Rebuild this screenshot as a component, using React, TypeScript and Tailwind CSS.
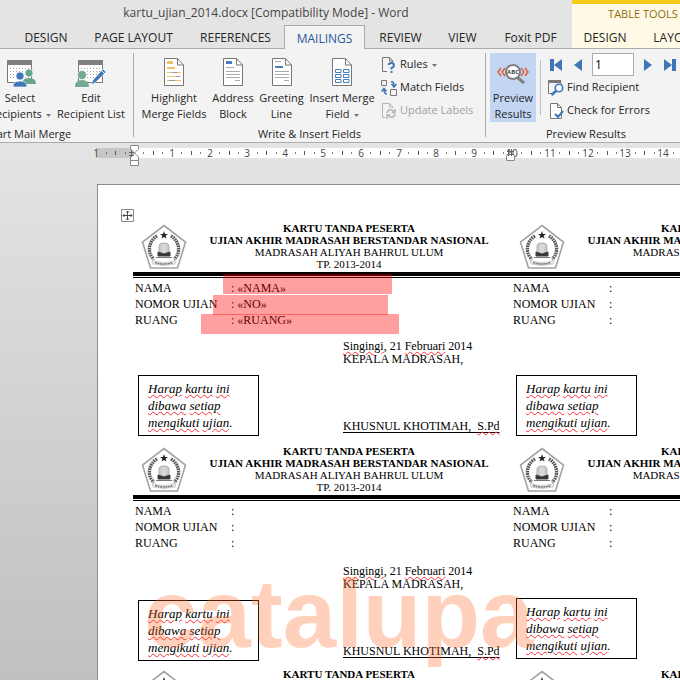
import React from "react";

const Misspelt = ({ children }: { children: React.ReactNode }) => (
  <span className="underline decoration-red-500 decoration-wavy decoration-1 underline-offset-1">{children}</span>
);

function Logo() {
  return (
    <svg width="46" height="46" viewBox="0 0 46 46" aria-hidden="true">
      <polygon points="23,1.5 44.5,18 36.5,44 9.5,44 1.5,18" fill="#fff" stroke="#a3a3a3" strokeWidth="1.6" />
      <path d="M16 12C7 17 6 30 13 35M30 12C39 17 40 30 33 35" fill="none" stroke="#555" strokeWidth="3.4" strokeDasharray="1.6 .8" />
      <polygon points="23,7 24,10 27,10 24.6,11.8 25.5,14.5 23,13 20.5,14.5 21.4,11.8 19,10 22,10" fill="#222" />
      <path d="M18 29V22Q18 19 23 19T28 22V29Z" fill="#ccc" stroke="#999" strokeWidth=".7" />
      <path d="M22 20V29M24 20V29" stroke="#eee" strokeWidth=".7" />
      <path d="M17 28L23 30L29 28V32H17Z" fill="#333" stroke="#444" />
      <path d="M15 33.5H31" stroke="#777" />
      <path d="M11 36Q23 41 35 36L34 40Q23 43 12 40Z" fill="#eee" stroke="#bbb" strokeWidth=".7" />
      <path d="M14 38.5Q23 41.500 32 38.5" fill="none" stroke="#777" strokeWidth="1.5" strokeDasharray="2 .6" />
    </svg>
  );
}

function Field({ label, value }: { label: string; value?: string }) {
  return (
    <div className="flex">
      <dt className="w-24">{label}</dt>
      <dd className="whitespace-pre">: {value}</dd>
    </div>
  );
}

function Card({ filled, late }: { filled?: boolean; late?: boolean }) {
  return (
    <article className="relative h-[223px] w-[378px] shrink-0">
      <header className="flex h-12 pl-2">
        <div className="mt-0.5 w-[46px] shrink-0"><Logo /></div>
        <div className="w-[328px] text-center text-[11px] leading-3 whitespace-nowrap">
          <p className="font-bold">KARTU TANDA PESERTA</p>
          <p className="font-bold">UJIAN AKHIR MADRASAH BERSTANDAR NASIONAL</p>
          <p>MADRASAH ALIYAH BAHRUL ULUM</p>
          <p>TP. 2013-2014</p>
        </div>
      </header>
      <div className="mt-0.5 h-1.5 border-b border-black bg-black bg-clip-content pb-px" />
      <dl className="mt-0.5 pl-0.5 text-[12px] leading-4">
        <Field label="NAMA" value={filled ? "«NAMA»" : ""} />
        <Field label="NOMOR UJIAN" value={filled ? "«NO»" : ""} />
        <Field label="RUANG" value={filled ? "«RUANG»" : ""} />
      </dl>
      <div className={late ? "flex pt-3.5" : "flex pt-3"}>
        <div className="mt-[35px] ml-[5px] h-[61px] w-[121px] shrink-0 border border-black pt-1 pl-[9px] text-[13px] leading-[17px] italic">
          <p><Misspelt>Harap</Misspelt> <Misspelt>kartu</Misspelt> <Misspelt>ini</Misspelt></p>
          <p><Misspelt>dibawa</Misspelt> <Misspelt>setiap</Misspelt></p>
          <p><Misspelt>mengikuti</Misspelt> <Misspelt>ujian</Misspelt>.</p>
        </div>
        <div className="ml-[84px] text-[12px] leading-[13px] whitespace-nowrap">
          <p><Misspelt>Singingi</Misspelt>, 21 <Misspelt>Februari</Misspelt> 2014</p>
          <p>KEPALA MADRASAH,</p>
          <p className="mt-[54px] whitespace-pre underline underline-offset-2">KHUSNUL KHOTIMAH,  <Misspelt>S.Pd</Misspelt></p>
        </div>
      </div>
      {filled && (
        <>
          <div className="absolute top-[52px] left-[90px] h-5 w-[169px] bg-[#ff000060]" />
          <div className="absolute top-[73px] left-20 h-5 w-[175px] bg-[#ff000060]" />
          <div className="absolute top-[92px] left-[68px] h-5 w-[198px] bg-[#ff000060]" />
        </>
      )}
    </article>
  );
}

const Sheet = ({ children }: { children?: React.ReactNode }) => (
  <svg width="22" height="30" viewBox="0 0 22 30" fill="none" aria-hidden="true">
    <path d="M1.5 1.5H14.5L20.5 8V28.500H1.5Z" fill="#fff" stroke="#777" />
    <path d="M14.5 1.5V8H20.5" stroke="#777" />
    {children}
  </svg>
);

const People = ({ edit }: { edit?: boolean }) => (
  <svg width="32" height="31" viewBox="0 0 32 31" aria-hidden="true">
    <path d="M3.5 4V25.5H27.500V4" fill="#fff" stroke="#777" />
    <path d="M3 3H28V8H3Z" fill="#808080" />
    <path d="M6 11.5H26M6 14.5H26M6 17.5H26M6 20.5H26" stroke="#aaa" strokeDasharray="1 2" />
    {edit ? (
      <>
        <circle cx="7" cy="18" r="4.5" fill="#74a892" stroke="#fff" strokeWidth=".6" />
        <path d="M0 30Q0 23 7 23T14 30Z" fill="#74a892" />
        <path d="M16 28L18 23L28 12L31 15L21 25Z" fill="#3f76b8" stroke="#fff" strokeWidth=".6" />
        <path d="M26.5 13.500L29.5 16.5" stroke="#fff" />
      </>
    ) : (
      <>
        <circle cx="25" cy="16" r="4" fill="#67a58b" stroke="#fff" strokeWidth=".6" />
        <path d="M18 27Q18 21 25 21T32 27Z" fill="#67a58b" />
        <circle cx="16" cy="19" r="4" fill="#3f76b8" stroke="#fff" strokeWidth=".6" />
        <path d="M9 30Q9 24 16 24T23 30Z" fill="#3f76b8" stroke="#fff" strokeWidth=".6" />
      </>
    )}
  </svg>
);

const Caret = () => (
  <svg className="ml-1 inline-block" width="5" height="3" viewBox="0 0 5 3" aria-hidden="true"><path d="M0 0H5L2.5 3Z" fill="#777" /></svg>
);

function Big({ className, icon, children }: { className: string; icon: React.ReactNode; children: React.ReactNode }) {
  return (
    <button type="button" className={`${className} flex h-[69px] shrink-0 flex-col items-center pt-1 leading-4 whitespace-nowrap`}>
      <span className="flex h-[34px] items-start">{icon}</span>
      {children}
    </button>
  );
}

function Small({ icon, children, disabled }: { icon: React.ReactNode; children: React.ReactNode; disabled?: boolean }) {
  return (
    <button type="button" disabled={disabled} className="flex h-[23px] items-center gap-[3px] whitespace-nowrap disabled:text-[#a0a0a0]">
      <svg width="16" height="16" viewBox="0 0 16 16" fill="none" aria-hidden="true">{icon}</svg>
      <span>{children}</span>
    </button>
  );
}

const tabs: [string, string][] = [
  ["DESIGN", "w-[68px]"],
  ["PAGE LAYOUT", "w-[107px]"],
  ["REFERENCES", "w-[97px]"],
  ["MAILINGS", "w-[81px]"],
  ["REVIEW", "w-[71px]"],
  ["VIEW", "w-[53px]"],
  ["Foxit PDF", "w-[83px]"],
];

function Ribbon() {
  return (
    <div className="flex h-[94px] shrink-0 overflow-hidden border-b border-[#ababab] bg-[#f3f3f3] pt-1 text-[11px]">
      <section className="flex h-[84px] w-[134px] shrink-0 flex-col border-r border-[#ababab]">
        <div className="-ml-4 flex">
          <Big className="w-[72px]" icon={<People />}><span>Select</span><span>Recipients<Caret /></span></Big>
          <Big className="w-[70px]" icon={<People edit />}><span>Edit</span><span>Recipient List</span></Big>
        </div>
        <h2 className="-ml-4 w-[90px] text-center leading-6 whitespace-nowrap">Start Mail Merge</h2>
      </section>
      <section className="flex h-[84px] w-[352px] shrink-0 flex-col border-r border-[#ababab]">
        <div className="flex pl-1">
          <Big className="w-[72px]" icon={
            <Sheet><path d="M4 4H10V7H4Z" fill="#eec069" /><path d="M4 11H12" stroke="#eec069" strokeWidth="2" /><path d="M4 15.5H18M4 19.5H18M4 23.5H18" stroke="#eec069" /><path d="M9 15.5H14M13 19.5H17M6 23.5H12" stroke="#999" /></Sheet>
          }><span>Highlight</span><span>Merge Fields</span></Big>
          <Big className="w-[46px]" icon={
            <Sheet><path d="M4 4H10V7H4Z" fill="#4a7ebb" /><path d="M4 10.5H12M4 14.5H18M4 17.5H18M4 20.5H18M13 23.5H18" stroke="#aaa" /></Sheet>
          }><span>Address</span><span>Block</span></Big>
          <Big className="w-[51px]" icon={
            <Sheet><path d="M4 4.5H10M4 14.5H18M4 17.5H18M4 20.5H18M13 23.5H18" stroke="#aaa" /><path d="M4 9H12V11H4Z" fill="#4a7ebb" /></Sheet>
          }><span>Greeting</span><span>Line</span></Big>
          <Big className="w-[70px]" icon={
            <Sheet><path d="M4.5 12.5H10V15.5H4.5ZM12.5 12.5H18V15.5H12.5ZM4.5 17.5H10V20.5H4.5ZM12.5 17.5H18V20.5H12.5ZM4.5 22.5H10V25.5H4.5ZM12.5 22.5H18V25.5H12.5Z" stroke="#4a7ebb" /></Sheet>
          }><span>Insert Merge</span><span>Field<Caret /></span></Big>
          <div className="ml-1">
            <Small icon={<><path d="M6 14.5H1.500V.5H8.500L12 4V5M8.5 .5V4H12" stroke="#777" /><path d="M7.5 8Q8 6 10.5 6T13 8.500Q13 10 10.5 11V12.5M10.5 14V16" stroke="#3f76b8" strokeWidth="2" /></>}>Rules<Caret /></Small>
            <Small icon={<><path d="M.5 .5H5.500V5.500H.5ZM9.5 9.500H15.5V15.5H9.500Z" stroke="#777" /><path d="M10 2Q13 1 13 6M10.5 4L13 7L15.5 4M6 14Q3 14 3 9M.5 11.5L3 8.500L5.5 11.5" stroke="#3f76b8" strokeWidth="1.5" /></>}>Match Fields</Small>
            <Small disabled icon={<><path d="M4 14.5H1.500V.5H8.500L12 4V5M8.5 .5V4H12" stroke="#b5b5b5" /><path d="M6 10Q7 6 11 7L13 9M14 6V9.500H10.5M14 11Q13 15 9 14L7 12.5M6 16V12H9.500" stroke="#b5b5b5" strokeWidth="1.5" /></>}>Update Labels</Small>
          </div>
        </div>
        <h2 className="text-center leading-6">Write &amp; Insert Fields</h2>
      </section>
      <section className="flex h-[84px] w-[200px] shrink-0 flex-col">
        <div className="flex pl-1">
          <Big className="w-[46px] bg-[#c2d5f2]" icon={
            <svg width="32" height="32" viewBox="0 0 32 32" fill="none" aria-hidden="true">
              <path d="M4 11L1 15L4 19M8 11L5 15L8 19M24 11L27 15L24 19M28 11L31 15L28 19" stroke="#e0603a" strokeWidth="1.5" />
              <path d="M20 20L27 26" stroke="#808080" strokeWidth="3" />
              <circle cx="16" cy="15" r="7" fill="#fff" stroke="#808080" strokeWidth="2" />
              <text x="16" y="17" textAnchor="middle" fontSize="6" fontWeight="700" fill="#444">ABC</text>
            </svg>
          }><span>Preview</span><span>Results</span></Big>
          <div className="mt-[7px] ml-1 h-[55px] w-px bg-[#c0c0c0]" />
          <div className="ml-[7px]">
            <div className="flex h-[23px] items-center">
              <button type="button" aria-label="First record" className="ml-0.5"><svg width="12" height="12" viewBox="0 0 12 12"><path d="M0 0H4V12H0ZM12 0V12L4 6Z" fill="#3f76b8" /></svg></button>
              <button type="button" aria-label="Previous record" className="ml-3"><svg width="8" height="12" viewBox="0 0 8 12"><path d="M8 0V12L0 6Z" fill="#3f76b8" /></svg></button>
              <input aria-label="Record" defaultValue="1" className="ml-2.5 h-[23px] w-[42px] border border-[#ababab] bg-white px-0.5 text-[12px] text-black" />
              <button type="button" aria-label="Next record" className="ml-2.5"><svg width="8" height="12" viewBox="0 0 8 12"><path d="M0 0V12L8 6Z" fill="#3f76b8" /></svg></button>
              <button type="button" aria-label="Last record" className="ml-3"><svg width="12" height="12" viewBox="0 0 12 12"><path d="M12 0H8V12H12ZM0 0V12L8 6Z" fill="#3f76b8" /></svg></button>
            </div>
            <Small icon={<><path d="M.5 1V13.5H4M13 3V5" stroke="#777" /><path d="M0 0H13V3H0Z" fill="#777" /><circle cx="11" cy="8" r="3.7" fill="#fff" stroke="#3f76b8" strokeWidth="1.6" /><path d="M8.5 10.5L3.5 15" stroke="#3f76b8" strokeWidth="2.5" /></>}>Find Recipient</Small>
            <Small icon={<><path d="M2.5 .5H9.500L13.5 4.500V15.5H2.500ZM9.5 .5V4.500H13.5" fill="#fff" stroke="#777" /><path d="M7 11L10 14L15 8" stroke="#3f76b8" strokeWidth="2" /></>}>Check for Errors</Small>
          </div>
        </div>
        <h2 className="text-center leading-6">Preview Results</h2>
      </section>
    </div>
  );
}

function Ruler() {
  const at = (n: number) => Math.round(134 + n * 37.8);
  const units = Array.from({ length: 16 }, (_, i) => i - 1);
  return (
    <svg className="block h-[41px] w-full shrink-0" fill="none" aria-label="Ruler">
      <rect x="96" y="5" width="38" height="10" fill="#c6c6c6" />
      <rect x="134" y="5" width="100%" height="10" fill="#fff" />
      {units.map((n) => (
        <g key={n}>
          {n !== 0 && <text x={at(n)} y="14" textAnchor="middle" fontSize="10" fill="#444">{Math.abs(n)}</text>}
          <path d={`M${at(n + 0.25)} 10h1M${at(n + 0.75)} 10h1`} stroke="#555" strokeWidth="1.5" />
          <path d={`M${at(n + 0.5) + 0.5} 8v4`} stroke="#555" />
        </g>
      ))}
      <path d="M130.5 2.500H138.5V6L134.5 10L130.5 6ZM134.5 10L138.5 14V17.5H130.5V14ZM130.5 17.5H138.5V22.5H130.5Z" fill="#fff" stroke="#888" />
      <path d="M506.5 17.5V13L510.5 9L514.5 13V17.5Z" fill="#fff" stroke="#888" />
      <path d="M507 8.500H514M507 11.5H514M508.5 6V13M511.5 6V13M129 9.500H134M129 12.5H134M131.5 7V14" stroke="#666" />
    </svg>
  );
}

export default function App() {
  return (
    <div className="relative flex h-screen flex-col overflow-hidden bg-[#e4e4e4] font-['Open_Sans','Noto_Sans',sans-serif] text-[12px] text-[#262626]">
      <header className="flex h-[49px] shrink-0">
        <div className="flex w-[572px] shrink-0 flex-col">
          <h1 className="h-[25px] pr-10 text-center leading-[26px] text-[#444]">kartu_ujian_2014.docx [Compatibility Mode] - Word</h1>
          <nav className="flex h-6 border-b border-[#ababab] pl-3">
            {tabs.map(([name, width]) => (
              <button key={name} type="button" className={`${width} shrink-0 pt-0.5 whitespace-nowrap ${name === "MAILINGS" ? "h-6 border border-b-0 border-[#ababab] bg-[#f3f3f3] text-[#2b579a]" : ""}`}>{name}</button>
            ))}
          </nav>
        </div>
        <div className="min-w-0 flex-1 overflow-hidden border-t-4 border-[#f5cd19] bg-[#fffae6]">
          <p className="h-[21px] w-[142px] text-center text-[11px] leading-[19px] text-[#8f6c0c]">TABLE TOOLS</p>
          <nav className="flex h-6 w-[142px] border-b border-[#ababab]">
            <button type="button" className="w-[66px] pt-0.5">DESIGN</button>
            <button type="button" className="w-[76px] pt-0.5">LAYOUT</button>
          </nav>
        </div>
      </header>
      <Ribbon />
      <main className="flex min-h-0 flex-1 flex-col bg-linear-to-b from-[#e4e4e4] to-[#c0c0c0]">
        <Ruler />
        <div className="ml-[97px] min-h-0 flex-1 overflow-hidden border-t border-l border-[#8c8c8c] bg-white pt-6 pl-[23px] font-['Liberation_Serif',serif] text-black">
          <svg className="block" width="13" height="13" viewBox="0 0 13 13" fill="none" aria-hidden="true">
            <path d="M.5 .5H12.5V12.5H.5Z" stroke="#888" />
            <path d="M6.5 2V11M2 6.500H11M5 3.500L6.5 2L8 3.500M5 9.500L6.5 11L8 9.500M3.5 5L2 6.500L3.5 8M9.5 5L11 6.500L9.5 8" stroke="#444" />
          </svg>
          <div className="ml-3">
            <div className="flex"><Card filled /><Card /></div>
            <div className="flex"><Card late /><Card /></div>
            <div className="flex"><Card /><Card /></div>
          </div>
        </div>
      </main>
      <div className="pointer-events-none absolute top-[559px] left-[144px] font-['Liberation_Sans',sans-serif] text-[96px] leading-[110px] font-bold text-[#ff6a2a50]">catalupa</div>
    </div>
  );
}
